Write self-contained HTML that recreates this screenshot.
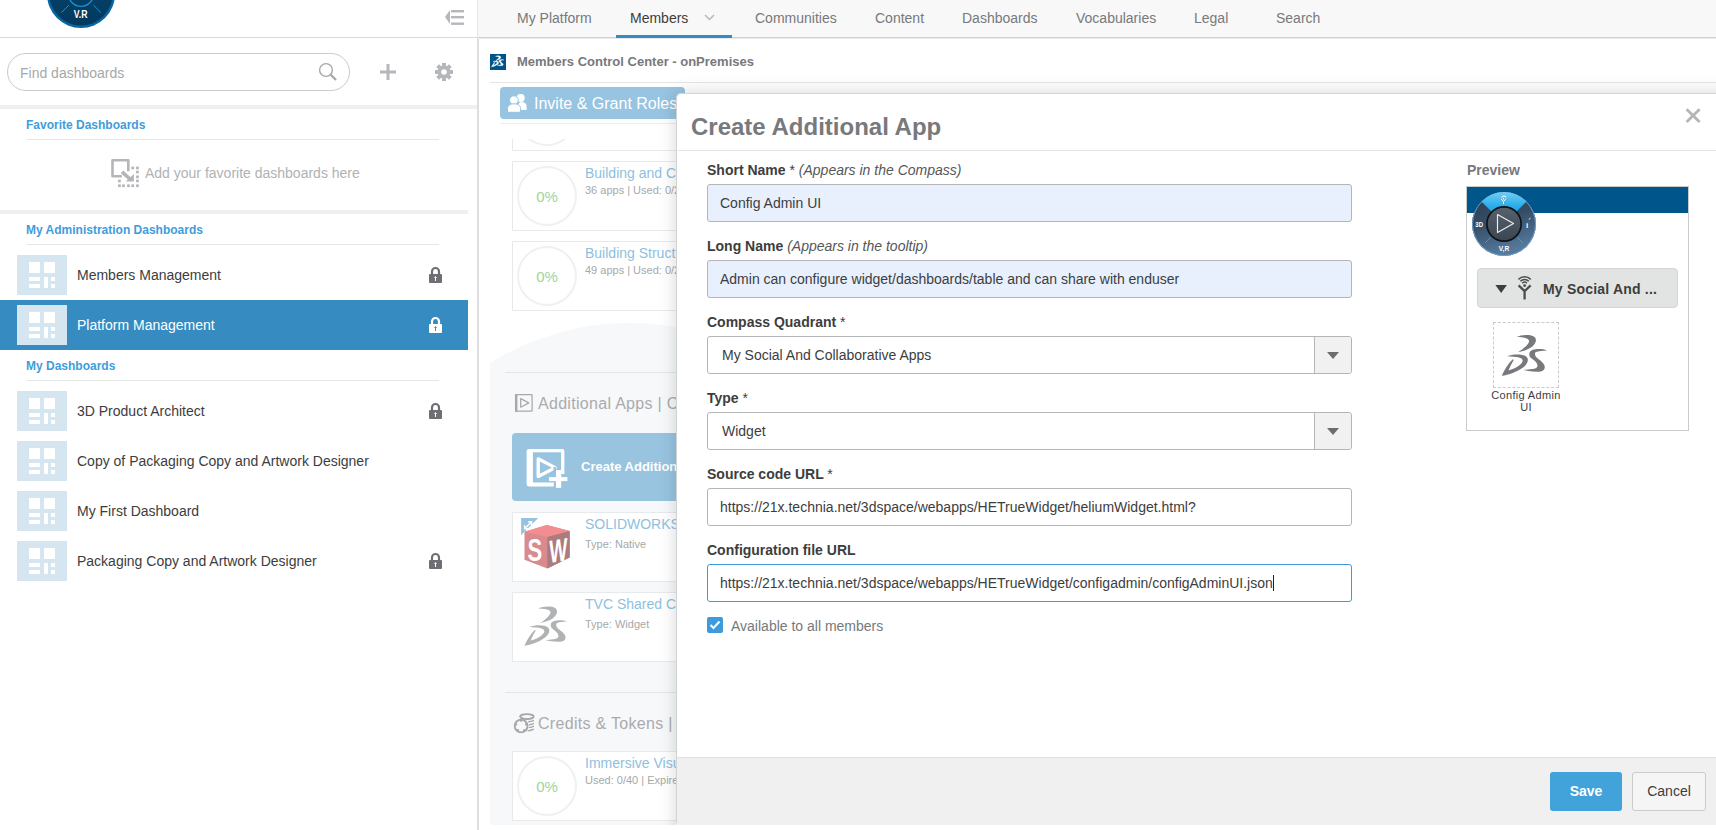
<!DOCTYPE html>
<html><head><meta charset="utf-8">
<style>
*{box-sizing:border-box;margin:0;padding:0}
html,body{width:1716px;height:830px;overflow:hidden;background:#fff;font-family:"Liberation Sans",sans-serif;color:#3d3d3d}
.abs{position:absolute}
/* sidebar */
#side{position:absolute;left:0;top:0;width:477px;height:830px;background:#fff}
#vline{position:absolute;left:477px;top:38px;width:2px;height:792px;background:#dcdedf}
#vline2{position:absolute;left:477px;top:0;width:1px;height:38px;background:#e5e6e7}
.hbar{position:absolute;left:0;height:4px;background:#eeefef}
.shead{position:absolute;left:26px;font-size:12px;font-weight:bold;color:#3e9ddb;line-height:14px;white-space:nowrap}
.sline{position:absolute;left:26px;width:413px;height:1px;background:#e6e7e8}
.row{position:absolute;left:0;width:468px;height:50px}
.row.sel{background:#368bc1}
.row .th{position:absolute;left:17px;top:5px;width:50px;height:40px;background:#d5e6f1}
.row .tx{position:absolute;left:77px;top:17px;font-size:14px;line-height:16px;color:#3d3d3d;white-space:nowrap}
.row.sel .tx{color:#fff}
.row .lk{position:absolute;left:429px;top:16px}
/* nav */
#nav{position:absolute;left:478px;top:0;width:1238px;height:39px;background:#f8f8f8;border-bottom:1px solid #e9eaeb}
#nav:after{content:"";position:absolute;left:0;top:37px;width:100%;height:1px;background:#cfd2d3}
.tab{position:absolute;top:10px;font-size:14px;line-height:16px;color:#77797c;white-space:nowrap}
/* main */
.card{position:absolute;left:512px;width:300px;background:#fff;border:1px solid #e8e9ea}
.ctitle{position:absolute;left:72px;font-size:14px;color:#8fc0e0;white-space:nowrap}
.csub{position:absolute;left:72px;font-size:11px;color:#a6a8aa;white-space:nowrap}
.pct{position:absolute;left:4px;width:60px;height:60px;border-radius:50%;border:2px solid #eff1f1;color:#9fd39a;font-size:15px;text-align:center;line-height:57px}
/* modal */
#modal{position:absolute;left:676px;top:93px;width:1060px;height:732px;background:#fff;border-top:1px solid #d3d5d6;border-left:1px solid #d0d3d3;border-radius:5px 0 0 4px}
.lbl{position:absolute;left:30px;font-size:14px;font-weight:bold;color:#3d3d3d;white-space:nowrap;line-height:16px}
.lbl i{font-weight:normal;color:#55575a}
.lbl span{font-weight:normal}
.inp{position:absolute;left:30px;width:645px;height:38px;border:1px solid #b3b5b7;border-radius:3px;background:#fff;font-size:14px;color:#3d3d3d;padding-left:12px;line-height:36px;white-space:nowrap}
.inp.af{background:#e8f0fe}
.sel2 .arr{position:absolute;right:0;top:0;width:37px;height:36px;border-left:1px solid #b3b5b7;background:#f1f1f1;border-radius:0 3px 3px 0}
.sel2 .arr:after{content:"";position:absolute;left:12px;top:15px;border-left:6px solid transparent;border-right:6px solid transparent;border-top:7px solid #6b6d70}
</style></head><body>

<div id="side">
  <!-- logo -->
  <svg class="abs" style="left:47px;top:-40px" width="68" height="68" viewBox="0 0 68 68">
    <defs><linearGradient id="lg" x1="0" y1="0" x2="0" y2="1"><stop offset="0" stop-color="#07466f"/><stop offset="1" stop-color="#033a5e"/></linearGradient></defs>
    <circle cx="34" cy="34" r="34" fill="#0865a3"/>
    <circle cx="34" cy="34" r="31.6" fill="url(#lg)"/>
    <circle cx="34" cy="34" r="12.4" fill="none" stroke="#1b90d2" stroke-width="1.4"/>
    <line x1="14.3" y1="52.7" x2="21.9" y2="45.1" stroke="#1b90d2" stroke-width="1"/>
    <line x1="46.4" y1="45.1" x2="54" y2="52.7" stroke="#1b90d2" stroke-width="1"/>
    <text x="26.8" y="57.9" font-family="Liberation Sans" font-weight="bold" font-size="10.5" fill="#fff" textLength="13.7" lengthAdjust="spacingAndGlyphs">V.R</text>
  </svg>
  <!-- collapse icon -->
  <svg class="abs" style="left:445px;top:9px" width="20" height="17" viewBox="0 0 20 17">
    <path d="M0 8 L5 1 L5 15 Z" fill="#b5b7ba"/>
    <rect x="6" y="1" width="13" height="2.4" fill="#b5b7ba"/>
    <rect x="6" y="7" width="13" height="2.4" fill="#b5b7ba"/>
    <rect x="6" y="13.5" width="13" height="2.4" fill="#b5b7ba"/>
  </svg>
  <div class="abs" style="left:0;top:37px;width:477px;height:1px;background:#d9dadb"></div>
  <!-- search -->
  <div class="abs" style="left:7px;top:53px;width:343px;height:38px;border:1px solid #c9cbcd;border-radius:19px"></div>
  <div class="abs" style="left:20px;top:65px;font-size:14px;line-height:16px;color:#a6a8aa">Find dashboards</div>
  <svg class="abs" style="left:318px;top:62px" width="20" height="20" viewBox="0 0 20 20">
    <circle cx="8" cy="8" r="6.4" fill="none" stroke="#a6a8ab" stroke-width="1.4"/>
    <line x1="12.5" y1="12.5" x2="18" y2="18" stroke="#a6a8ab" stroke-width="2.3"/>
  </svg>
  <svg class="abs" style="left:379px;top:63px" width="18" height="18" viewBox="0 0 18 18">
    <rect x="7.5" y="1" width="3" height="16" fill="#b5b7ba"/><rect x="1" y="7.5" width="16" height="3" fill="#b5b7ba"/>
  </svg>
  <svg class="abs" style="left:434px;top:62px" width="20" height="20" viewBox="0 0 20 20">
    <g fill="#b5b7ba" transform="translate(10 10)">
      <circle r="6.5"/>
      <rect x="-2" y="-9" width="4" height="18"/>
      <rect x="-2" y="-9" width="4" height="18" transform="rotate(45)"/>
      <rect x="-2" y="-9" width="4" height="18" transform="rotate(90)"/>
      <rect x="-2" y="-9" width="4" height="18" transform="rotate(135)"/>
    </g>
    <circle cx="10" cy="10" r="2.8" fill="#fff"/>
  </svg>
  <div class="hbar" style="top:105px;width:477px"></div>

  <div class="shead" style="top:118px">Favorite Dashboards</div>
  <div class="sline" style="top:139px"></div>
  <svg class="abs" style="left:111px;top:159px" width="30" height="30" viewBox="0 0 30 30">
    <path d="M10.9 17.2 H1.5 V1.3 H17.3 V12.3" fill="none" stroke="#b3b5b8" stroke-width="2.6" stroke-linejoin="round"/>
    <path d="M11 12.8 L20 21" stroke="#b3b5b8" stroke-width="3.6"/>
    <path d="M22.9 14.9 V22.6 H14.7 Z" fill="#b3b5b8"/>
    <g fill="#b3b5b8"><rect x="25.1" y="7.6" width="2.7" height="2.7"/><rect x="20.400000000000002" y="7.6" width="2.7" height="2.7"/><rect x="25.1" y="11.7" width="2.7" height="2.7"/><rect x="25.1" y="16.5" width="2.7" height="2.7"/><rect x="25.1" y="20.6" width="2.7" height="2.7"/><rect x="25.1" y="25.4" width="2.7" height="2.7"/><rect x="20.400000000000002" y="25.4" width="2.7" height="2.7"/><rect x="16.1" y="25.4" width="2.7" height="2.7"/><rect x="11.1" y="25.4" width="2.7" height="2.7"/><rect x="7.1" y="25.4" width="2.7" height="2.7"/><rect x="7.1" y="20.6" width="2.7" height="2.7"/></g>
  </svg>
  <div class="abs" style="left:145px;top:165px;font-size:14px;line-height:16px;color:#b0b2b5;white-space:nowrap">Add your favorite dashboards here</div>
  <div class="hbar" style="top:210px;width:468px"></div>

  <div class="shead" style="top:223px">My Administration Dashboards</div>
  <div class="sline" style="top:244px"></div>
  <div class="row" style="top:250px"><div class="th"><svg width="50" height="40" viewBox="0 0 50 40" style="display:block"><g fill="#fff"><rect x="12" y="7" width="11" height="11"/><rect x="27" y="7" width="11" height="11"/><rect x="12" y="22" width="11" height="4"/><rect x="12" y="29" width="11" height="4"/><rect x="27" y="22" width="4" height="11"/><rect x="34" y="22" width="4" height="4"/><rect x="34" y="29" width="4" height="4"/></g></svg></div><div class="tx">Members Management</div><svg class="lk" width="13" height="17" viewBox="0 0 13 17"><path d="M3 9 V5.5 A3.5 3.5 0 0 1 10 5.5 V9" fill="none" stroke="#6d6f72" stroke-width="2.2"/><rect x="0" y="8" width="13" height="9" rx="1" fill="#6d6f72"/><path d="M6.5 10 L5 12 H6 V15 H7 V12 H8 Z" fill="#fff"/></svg></div>
<div class="row sel" style="top:300px"><div class="th"><svg width="50" height="40" viewBox="0 0 50 40" style="display:block"><g fill="#fff"><rect x="12" y="7" width="11" height="11"/><rect x="27" y="7" width="11" height="11"/><rect x="12" y="22" width="11" height="4"/><rect x="12" y="29" width="11" height="4"/><rect x="27" y="22" width="4" height="11"/><rect x="34" y="22" width="4" height="4"/><rect x="34" y="29" width="4" height="4"/></g></svg></div><div class="tx">Platform Management</div><svg class="lk" width="13" height="17" viewBox="0 0 13 17"><path d="M3 9 V5.5 A3.5 3.5 0 0 1 10 5.5 V9" fill="none" stroke="#fff" stroke-width="2.2"/><rect x="0" y="8" width="13" height="9" rx="1" fill="#fff"/><path d="M6.5 10 L5 12 H6 V15 H7 V12 H8 Z" fill="#368bc1"/></svg></div>
<div class="shead" style="top:359px">My Dashboards</div>
<div class="sline" style="top:380px"></div>
<div class="row" style="top:386px"><div class="th"><svg width="50" height="40" viewBox="0 0 50 40" style="display:block"><g fill="#fff"><rect x="12" y="7" width="11" height="11"/><rect x="27" y="7" width="11" height="11"/><rect x="12" y="22" width="11" height="4"/><rect x="12" y="29" width="11" height="4"/><rect x="27" y="22" width="4" height="11"/><rect x="34" y="22" width="4" height="4"/><rect x="34" y="29" width="4" height="4"/></g></svg></div><div class="tx">3D Product Architect</div><svg class="lk" width="13" height="17" viewBox="0 0 13 17"><path d="M3 9 V5.5 A3.5 3.5 0 0 1 10 5.5 V9" fill="none" stroke="#6d6f72" stroke-width="2.2"/><rect x="0" y="8" width="13" height="9" rx="1" fill="#6d6f72"/><path d="M6.5 10 L5 12 H6 V15 H7 V12 H8 Z" fill="#fff"/></svg></div>
<div class="row" style="top:436px"><div class="th"><svg width="50" height="40" viewBox="0 0 50 40" style="display:block"><g fill="#fff"><rect x="12" y="7" width="11" height="11"/><rect x="27" y="7" width="11" height="11"/><rect x="12" y="22" width="11" height="4"/><rect x="12" y="29" width="11" height="4"/><rect x="27" y="22" width="4" height="11"/><rect x="34" y="22" width="4" height="4"/><rect x="34" y="29" width="4" height="4"/></g></svg></div><div class="tx">Copy of Packaging Copy and Artwork Designer</div></div>
<div class="row" style="top:486px"><div class="th"><svg width="50" height="40" viewBox="0 0 50 40" style="display:block"><g fill="#fff"><rect x="12" y="7" width="11" height="11"/><rect x="27" y="7" width="11" height="11"/><rect x="12" y="22" width="11" height="4"/><rect x="12" y="29" width="11" height="4"/><rect x="27" y="22" width="4" height="11"/><rect x="34" y="22" width="4" height="4"/><rect x="34" y="29" width="4" height="4"/></g></svg></div><div class="tx">My First Dashboard</div></div>
<div class="row" style="top:536px"><div class="th"><svg width="50" height="40" viewBox="0 0 50 40" style="display:block"><g fill="#fff"><rect x="12" y="7" width="11" height="11"/><rect x="27" y="7" width="11" height="11"/><rect x="12" y="22" width="11" height="4"/><rect x="12" y="29" width="11" height="4"/><rect x="27" y="22" width="4" height="11"/><rect x="34" y="22" width="4" height="4"/><rect x="34" y="29" width="4" height="4"/></g></svg></div><div class="tx">Packaging Copy and Artwork Designer</div><svg class="lk" width="13" height="17" viewBox="0 0 13 17"><path d="M3 9 V5.5 A3.5 3.5 0 0 1 10 5.5 V9" fill="none" stroke="#6d6f72" stroke-width="2.2"/><rect x="0" y="8" width="13" height="9" rx="1" fill="#6d6f72"/><path d="M6.5 10 L5 12 H6 V15 H7 V12 H8 Z" fill="#fff"/></svg></div>

</div>
<div id="vline"></div><div id="vline2"></div>

<div id="nav">
  <div class="tab" style="left:39px">My Platform</div>
  <div class="tab" style="left:152px;color:#3d3d3d">Members</div>
  <svg class="abs" style="left:226px;top:14px" width="11" height="7" viewBox="0 0 11 7"><path d="M1 1 L5.5 5.5 L10 1" fill="none" stroke="#b5b7ba" stroke-width="1.5"/></svg>
  <div class="abs" style="left:138px;top:35px;width:116px;height:3px;background:#368bc1;z-index:1"></div>
  <div class="tab" style="left:277px">Communities</div>
  <div class="tab" style="left:397px">Content</div>
  <div class="tab" style="left:484px">Dashboards</div>
  <div class="tab" style="left:598px">Vocabularies</div>
  <div class="tab" style="left:716px">Legal</div>
  <div class="tab" style="left:798px">Search</div>
</div>

<div id="main">
  <!-- header -->
  <div class="abs" style="left:490px;top:54px;width:16px;height:16px;background:#005386"></div>
  <svg class="abs" style="left:489.2px;top:54.3px" width="16.8" height="15.4" viewBox="0 0 60 55"><g fill="#fff" stroke="#fff" stroke-width="1.6" stroke-linejoin="round">
<path d="M23.5 8.4 C28 6.4 37.5 5.6 40.8 8.6 C43.5 11.5 41.5 15.5 38 18.2 C34.5 20.8 29 22.2 25.1 23 C29.5 20.5 33.5 17 35.2 13.8 C36.5 11.2 34 9.8 29.9 9.1 C27.5 8.7 25.5 8.5 23.5 8.4 Z"/>
<path d="M14.4 27.1 C20 24.8 29.5 24.5 33 27.6 C36 30.5 33.5 35 29.8 37.8 C24 42 16 44.8 9.3 45.8 C12 40 15.5 34 19.8 30 L20.8 30.6 C18.8 34 17 37.5 15.8 40.6 C21 39 26.5 36.2 28.6 33.2 C30 31.2 29.5 29.3 26.5 28.4 C23.5 27.5 18.5 27.3 14.4 27.1 Z"/>
<path d="M52.7 21.4 C47 19.5 37.5 19.5 36 23.5 C35 26.5 36.5 28 39 30 C41 31.5 43 33 43.5 35.5 C44 37.5 42 38.8 38.5 39.3 C35.5 39.7 32.5 39.9 30.2 40.1 C35.5 41.5 43 42.5 47.5 41.3 C50.5 40.5 51.5 37.5 49.5 34.5 C47.5 31.5 44.5 30 43 28.5 C41 26.5 40.5 24 42 23 C44.5 21.8 49 21.5 52.7 21.4 Z"/>
</g></svg>
  <div class="abs" style="left:517px;top:54px;font-size:13px;line-height:15px;font-weight:bold;color:#77797c;white-space:nowrap">Members Control Center - onPremises</div>
  <div class="abs" style="left:490px;top:82px;width:1226px;height:1px;background:#e4e5e6"></div>
  <!-- invite button -->
  <div class="abs" style="left:500px;top:87px;width:185px;height:32px;background:#97c4e1;border-radius:4px"></div>
  <svg class="abs" style="left:507px;top:94px" width="22" height="20" viewBox="0 0 22 20">
    <circle cx="13.7" cy="3.9" r="4" fill="#fff"/>
    <path d="M10.7 15.9 V12.4 C10.7 9.5 12.7 7.9 15.15 7.9 C17.6 7.9 19.6 9.5 19.6 12.4 V15.9 Z" fill="#fff"/>
    <circle cx="6.9" cy="6.2" r="4.4" fill="#fff" stroke="#97c4e1" stroke-width="1"/>
    <path d="M0.5 18.3 V14.5 C0.5 11.6 3.2 9.8 7 9.8 C10.9 9.8 13.6 11.6 13.6 14.5 V18.3 Z" fill="#fff" stroke="#97c4e1" stroke-width="1"/>
  </svg>
  <div class="abs" style="left:534px;top:95px;font-size:16px;line-height:18px;color:#fff;white-space:nowrap">Invite &amp; Grant Roles</div>
  <div class="abs" style="left:500px;top:123px;width:1216px;height:1px;background:#eceded"></div>
  <!-- scroll area -->
  <div class="abs" style="left:490px;top:139px;width:190px;height:686px;overflow:hidden">
    <div class="abs" style="left:-125px;top:184px;width:530px;height:530px;border-radius:50%;background:#f7f8fa"></div>
    <div class="abs" style="left:0;top:300px;width:190px;height:386px;background:#f7f8fa;border-bottom-left-radius:3px"></div>
    <!-- card0 -->
    <div class="card" style="left:22px;top:-58px;height:70px"><div class="pct" style="top:4px"></div></div>
    <div class="card" style="left:22px;top:22px;height:70px"><div class="pct" style="top:4px">0%</div>
      <div class="ctitle" style="top:3px;line-height:16px">Building and Construction</div>
      <div class="csub" style="top:21.5px;line-height:13px">36 apps | Used: 0/2</div></div>
    <div class="card" style="left:22px;top:102px;height:70px"><div class="pct" style="top:4px">0%</div>
      <div class="ctitle" style="top:3px;line-height:16px">Building Structure</div>
      <div class="csub" style="top:21.5px;line-height:13px">49 apps | Used: 0/2</div></div>
    <div class="abs" style="left:15px;top:233px;width:400px;height:1px;background:#e4e5e6"></div>
    <svg class="abs" style="left:24px;top:254px" width="20" height="20" viewBox="0 0 20 20"><rect x="1.6" y="1.7" width="16.5" height="16.5" rx="0.6" fill="none" stroke="#a6a8aa" stroke-width="1.25"/><rect x="1" y="1.1" width="2.4" height="17.7" fill="#a6a8aa"/><path d="M6.7 5.6 L14.8 9.9 L6.7 14.2 Z" fill="none" stroke="#a6a8aa" stroke-width="1.25" stroke-linejoin="round"/></svg>
    <div class="abs" style="left:48px;top:256px;font-size:16px;line-height:18px;color:#a9abad;white-space:nowrap;letter-spacing:0.3px">Additional Apps | Custom</div>
    <!-- create button -->
    <div class="abs" style="left:22px;top:294px;width:300px;height:68px;background:#98c4e0;border-radius:4px"></div>
    <svg class="abs" style="left:35px;top:309px" width="44" height="42" viewBox="0 0 44 42"><g fill="#fff"><path d="M4 0.9 H37 A2.4 2.4 0 0 1 39.4 3.3 V26.1 H36.1 V4.2 H7.9 V34.4 H28.8 V38.4 H4 A2.4 2.4 0 0 1 1.6 36 V3.3 A2.4 2.4 0 0 1 4 0.9 Z"/><rect x="31.1" y="22.2" width="5" height="17.5"/><rect x="24.1" y="29.1" width="18.3" height="4"/></g><path d="M13.2 10.8 L30.2 19.65 L13.2 28.5 Z" fill="none" stroke="#fff" stroke-width="3.3" stroke-linejoin="round"/><rect x="28.5" y="19" width="2.6" height="10" fill="#98c4e0"/><rect x="31.1" y="22.2" width="5" height="17.5" fill="#fff"/></svg>
    <div class="abs" style="left:91px;top:320px;font-size:13px;line-height:15px;font-weight:bold;color:#fff;white-space:nowrap">Create Additional App</div>
    <!-- solidworks -->
    <div class="card" style="left:22px;top:373px;height:70px">
      <div class="ctitle" style="top:3px;line-height:16px">SOLIDWORKS</div>
      <div class="csub" style="top:24.5px;line-height:13px">Type: Native</div></div>
    <svg class="abs" style="left:31px;top:378px" width="52" height="54" viewBox="0 0 52 54">
      <path d="M0.1 1.1 H17.2 L0.1 18.2 Z" fill="#94c2e0"/>
      <path d="M3.6 11.8 L10.6 4.8 M3.6 8.3 V11.8 H7.1 M7.1 4.8 H10.6 V8.3" fill="none" stroke="#fff" stroke-width="1.5"/>
      <path d="M3.5 14.7 L25.9 7.9 L48.7 14 L48.7 40.6 L26.3 51.6 L3.5 42.8 Z" fill="#d98a8e"/>
      <path d="M3.5 14.7 L25.9 7.9 L48.7 14 L26.3 20.1 Z" fill="#f28d91"/>
      <path d="M26.3 20.1 L48.7 14 L48.7 40.6 L26.3 51.6 Z" fill="#ab7b7e"/>
      <text x="0" y="0" font-family="Liberation Sans" font-weight="bold" font-size="32" fill="#fff" transform="translate(6.6 43.6) scale(0.69 1)">S</text>
      <text x="0" y="0" font-family="Liberation Sans" font-weight="bold" font-size="32" fill="#fff" transform="translate(28.3 46) skewY(-9) scale(0.6 1)">W</text>
    </svg>
    <!-- tvc -->
    <div class="card" style="left:22px;top:453px;height:70px">
      <div class="ctitle" style="top:3px;line-height:16px">TVC Shared Component</div>
      <div class="csub" style="top:24.5px;line-height:13px">Type: Widget</div></div>
    <svg class="abs" style="left:25px;top:461px" width="60" height="55" viewBox="0 0 60 55"><g fill="#b0b2b4">
<path d="M23.5 8.4 C28 6.4 37.5 5.6 40.8 8.6 C43.5 11.5 41.5 15.5 38 18.2 C34.5 20.8 29 22.2 25.1 23 C29.5 20.5 33.5 17 35.2 13.8 C36.5 11.2 34 9.8 29.9 9.1 C27.5 8.7 25.5 8.5 23.5 8.4 Z"/>
<path d="M14.4 27.1 C20 24.8 29.5 24.5 33 27.6 C36 30.5 33.5 35 29.8 37.8 C24 42 16 44.8 9.3 45.8 C12 40 15.5 34 19.8 30 L20.8 30.6 C18.8 34 17 37.5 15.8 40.6 C21 39 26.5 36.2 28.6 33.2 C30 31.2 29.5 29.3 26.5 28.4 C23.5 27.5 18.5 27.3 14.4 27.1 Z"/>
<path d="M52.7 21.4 C47 19.5 37.5 19.5 36 23.5 C35 26.5 36.5 28 39 30 C41 31.5 43 33 43.5 35.5 C44 37.5 42 38.8 38.5 39.3 C35.5 39.7 32.5 39.9 30.2 40.1 C35.5 41.5 43 42.5 47.5 41.3 C50.5 40.5 51.5 37.5 49.5 34.5 C47.5 31.5 44.5 30 43 28.5 C41 26.5 40.5 24 42 23 C44.5 21.8 49 21.5 52.7 21.4 Z"/>
</g></svg>
    <div class="abs" style="left:15px;top:553px;width:400px;height:1px;background:#e4e5e6"></div>
    <svg class="abs" style="left:23px;top:571px" width="24" height="24" viewBox="0 0 24 24"><g fill="none" stroke="#a6a8aa"><ellipse cx="13.9" cy="6.6" rx="6.8" ry="2.5" stroke-width="1.9"/><path d="M15.2 11.7 Q18.5 11.6 20.9 10.3 M15.8 14.8 Q18.7 14.6 20.9 13.4 M15.8 17.6 Q18.7 17.4 20.9 16.2 M14.5 20.9 Q18.2 20.6 20.9 19.2" stroke-width="1.4"/><path d="M7.5 7.5 Q13.9 10.2 20.7 7.2" stroke-width="1.2"/></g><circle cx="8.1" cy="16" r="6.4" fill="#f7f8fa" stroke="#a6a8aa" stroke-width="1.9"/><g fill="#a6a8aa"><circle cx="8.10" cy="10.80" r="1.15"/><circle cx="13.05" cy="14.39" r="1.15"/><circle cx="11.16" cy="20.21" r="1.15"/><circle cx="5.04" cy="20.21" r="1.15"/><circle cx="3.15" cy="14.39" r="1.15"/></g></svg>
    <div class="abs" style="left:48px;top:576px;font-size:16px;line-height:18px;color:#a9abad;white-space:nowrap;letter-spacing:0.3px">Credits &amp; Tokens | Details</div>
    <div class="card" style="left:22px;top:612px;height:70px"><div class="pct" style="top:4px">0%</div>
      <div class="ctitle" style="top:3px;line-height:16px">Immersive Visualization</div>
      <div class="csub" style="top:21.5px;line-height:13px">Used: 0/40 | Expires</div></div>
  </div>
</div>


<div class="abs" style="left:600px;top:60px;width:1116px;height:765px;overflow:hidden"><div class="abs" style="left:76px;top:33px;width:1100px;height:760px;border-radius:5px 0 0 4px;box-shadow:0 0 18px rgba(0,0,0,0.16)"></div></div>
<div id="modal">
</div>
<div id="mc">
  <div class="abs" style="left:691px;top:113px;font-size:24px;line-height:28px;font-weight:bold;color:#77797c;white-space:nowrap">Create Additional App</div>
  <svg class="abs" style="left:1685px;top:107px" width="17" height="17" viewBox="0 0 17 17"><path d="M1.6 2.2 L14.6 15 M14.6 2.2 L1.6 15" stroke="#b3b5b8" stroke-width="2.8"/></svg>
  <div class="abs" style="left:678px;top:150px;width:1038px;height:1px;background:#e2e4e5"></div>

  <div class="lbl" style="left:707px;top:162px">Short Name <span>*</span> <i>(Appears in the Compass)</i></div>
  <div class="inp af" style="left:707px;top:184px">Config Admin UI</div>
  <div class="lbl" style="left:707px;top:238px">Long Name <i>(Appears in the tooltip)</i></div>
  <div class="inp af" style="left:707px;top:260px">Admin can configure widget/dashboards/table and can share with enduser</div>
  <div class="lbl" style="left:707px;top:314px">Compass Quadrant <span>*</span></div>
  <div class="inp sel2" style="left:707px;top:336px;padding-left:14px">My Social And Collaborative Apps<div class="arr"></div></div>
  <div class="lbl" style="left:707px;top:390px">Type <span>*</span></div>
  <div class="inp sel2" style="left:707px;top:412px;padding-left:14px">Widget<div class="arr"></div></div>
  <div class="lbl" style="left:707px;top:466px">Source code URL <span>*</span></div>
  <div class="inp" style="left:707px;top:488px">https://21x.technia.net/3dspace/webapps/HETrueWidget/heliumWidget.html?</div>
  <div class="lbl" style="left:707px;top:542px">Configuration file URL</div>
  <div class="inp" style="left:707px;top:564px;border-color:#3d9bdc">https://21x.technia.net/3dspace/webapps/HETrueWidget/configadmin/configAdminUI.json<span style="display:inline-block;width:1px;height:16px;background:#222;vertical-align:-3px"></span></div>
  <div class="abs" style="left:707px;top:617px;width:16px;height:16px;background:#3d9bdc;border-radius:2px"></div>
  <svg class="abs" style="left:707px;top:617px" width="16" height="16" viewBox="0 0 16 16"><path d="M3.5 8 L6.5 11 L12.5 4.5" fill="none" stroke="#fff" stroke-width="2"/></svg>
  <div class="abs" style="left:731px;top:618px;font-size:14px;line-height:16px;color:#77797c;white-space:nowrap">Available to all members</div>

  <div class="abs" style="left:1467px;top:162px;font-size:14px;line-height:16px;font-weight:bold;color:#77797c">Preview</div>
  <div class="abs" style="left:1466px;top:186px;width:223px;height:245px;border:1px solid #c9cbcd;background:#fff"></div>
  <div class="abs" style="left:1467px;top:187px;width:221px;height:26px;background:#00568a"></div>
  <svg class="abs" style="left:1471px;top:191px" width="66" height="66" viewBox="0 0 66 66">
    <defs>
      <linearGradient id="cg" x1="0" y1="0" x2="0.3" y2="1"><stop offset="0" stop-color="#2b3c4f"/><stop offset="0.5" stop-color="#344d66"/><stop offset="1" stop-color="#55799c"/></linearGradient>
      <linearGradient id="cb" x1="0" y1="0" x2="0" y2="1"><stop offset="0" stop-color="#72cdf4"/><stop offset="0.45" stop-color="#28ace9"/><stop offset="1" stop-color="#0d9ae0"/></linearGradient>
      <linearGradient id="ci" x1="0" y1="0" x2="0" y2="1"><stop offset="0" stop-color="#56616c"/><stop offset="1" stop-color="#3a4652"/></linearGradient>
    </defs>
    <circle cx="33" cy="33" r="32" fill="url(#cg)"/>
    <circle cx="33" cy="33" r="31.5" fill="none" stroke="#6f9dc6" stroke-width="1"/>
    <path d="M33 33 L10.4 10.4 A32 32 0 0 1 55.6 10.4 Z" fill="url(#cb)"/>
    <path d="M14 52 L20 46 M52 52 L46 46" stroke="#8fb0c8" stroke-width="0.8" opacity="0.6"/>
    <circle cx="33" cy="33" r="18" fill="#0d1218"/>
    <circle cx="33" cy="33" r="16.3" fill="url(#ci)"/>
    <path d="M26.5 23.5 L42.5 32.5 L26.5 41.5 Z" fill="none" stroke="#e8edf1" stroke-width="1.2" stroke-linejoin="round"/>
    <text x="4.3" y="36" font-family="Liberation Sans" font-weight="bold" font-size="7" fill="#fff" textLength="7.7" lengthAdjust="spacingAndGlyphs">3D</text>
    <text x="55" y="36.5" font-family="Liberation Sans" font-weight="bold" font-size="8" fill="#fff">i</text>
    <path d="M57.8 28.5 L59.5 27.2" stroke="#fff" stroke-width="0.9"/>
    <text x="27.8" y="59.9" font-family="Liberation Sans" font-weight="bold" font-size="6.5" fill="#fff" textLength="10.4" lengthAdjust="spacingAndGlyphs">V,R</text>
    <g fill="none" stroke="#fff" stroke-width="1"><path d="M30.5 6.2 A3.5 3.5 0 0 1 35.5 6.2"/><path d="M30.2 8.2 L32.5 10.5 L34.8 8.2 M32.5 10.5 V13"/></g>
    <circle cx="32.5" cy="7.8" r="0.8" fill="#fff"/>
  </svg>
  <div class="abs" style="left:1477px;top:268px;width:201px;height:40px;background:#e2e4e3;border:1px solid #d5d7d7;border-radius:4px"></div>
  <svg class="abs" style="left:1495px;top:285px" width="12" height="9" viewBox="0 0 12 9"><path d="M0.4 0 H11.9 L6.15 8 Z" fill="#3d3d3d"/></svg>
  <svg class="abs" style="left:1517px;top:274px" width="16" height="27" viewBox="0 0 16 27">
    <path d="M5.27 9.17 A3.3 3.3 0 0 1 9.93 9.17 M3.36 7.26 A6.0 6.0 0 0 1 11.84 7.26 M1.45 5.35 A8.7 8.7 0 0 1 13.75 5.35" fill="none" stroke="#4d4d4f" stroke-width="1.5"/>
    <circle cx="7.6" cy="11.6" r="1.45" fill="#4d4d4f"/>
    <path d="M1.6 11.4 L7.6 17.2 L13.6 11.4 M7.6 17 V25.4" fill="none" stroke="#4d4d4f" stroke-width="2.3"/>
  </svg>
  <div class="abs" style="left:1543px;top:281px;font-size:14px;line-height:16px;font-weight:bold;color:#3d3d3d;white-space:nowrap;letter-spacing:0.2px">My Social And ...</div>
  <div class="abs" style="left:1493px;top:322px;width:66px;height:66px;border:1px dashed #c9cbcd"></div>
  <svg class="abs" style="left:1491.6px;top:327.5px" width="62.7" height="57.5" viewBox="0 0 60 55"><g fill="#77797c">
<path d="M23.5 8.4 C28 6.4 37.5 5.6 40.8 8.6 C43.5 11.5 41.5 15.5 38 18.2 C34.5 20.8 29 22.2 25.1 23 C29.5 20.5 33.5 17 35.2 13.8 C36.5 11.2 34 9.8 29.9 9.1 C27.5 8.7 25.5 8.5 23.5 8.4 Z"/>
<path d="M14.4 27.1 C20 24.8 29.5 24.5 33 27.6 C36 30.5 33.5 35 29.8 37.8 C24 42 16 44.8 9.3 45.8 C12 40 15.5 34 19.8 30 L20.8 30.6 C18.8 34 17 37.5 15.8 40.6 C21 39 26.5 36.2 28.6 33.2 C30 31.2 29.5 29.3 26.5 28.4 C23.5 27.5 18.5 27.3 14.4 27.1 Z"/>
<path d="M52.7 21.4 C47 19.5 37.5 19.5 36 23.5 C35 26.5 36.5 28 39 30 C41 31.5 43 33 43.5 35.5 C44 37.5 42 38.8 38.5 39.3 C35.5 39.7 32.5 39.9 30.2 40.1 C35.5 41.5 43 42.5 47.5 41.3 C50.5 40.5 51.5 37.5 49.5 34.5 C47.5 31.5 44.5 30 43 28.5 C41 26.5 40.5 24 42 23 C44.5 21.8 49 21.5 52.7 21.4 Z"/>
</g></svg>
  <div class="abs" style="left:1476px;top:390px;width:100px;font-size:11px;line-height:11.5px;color:#3d3d3d;text-align:center;letter-spacing:0.35px">Config Admin<br>UI</div>

  <div class="abs" style="left:677px;top:757px;width:1039px;height:68px;background:#f0f0f0;border-top:1px solid #dfe1e1;border-bottom-left-radius:3px"></div>
  <div class="abs" style="left:1550px;top:772px;width:72px;height:39px;background:#42a2da;border-radius:3px;color:#fff;font-size:14px;font-weight:bold;text-align:center;line-height:39px">Save</div>
  <div class="abs" style="left:1632px;top:772px;width:74px;height:39px;background:#f5f5f5;border:1px solid #c9cbcd;border-radius:3px;color:#3d3d3d;font-size:14px;text-align:center;line-height:37px">Cancel</div>
</div>


</body></html>
